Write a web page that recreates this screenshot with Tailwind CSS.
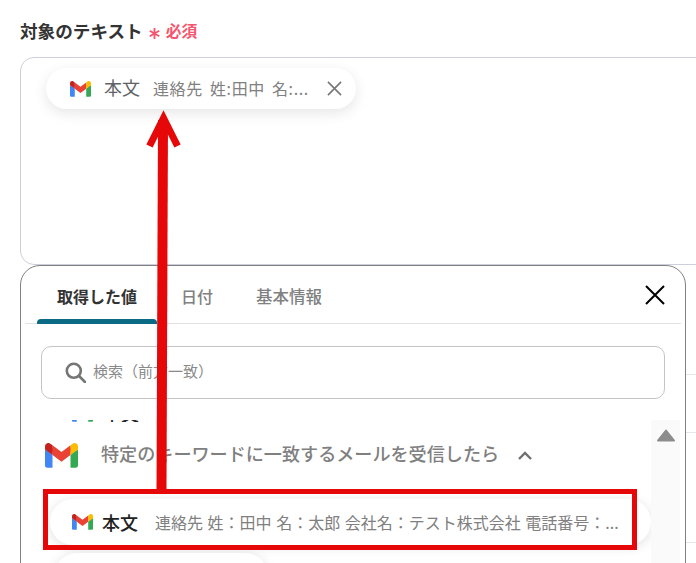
<!DOCTYPE html>
<html lang="ja">
<head>
    <meta charset="UTF-8">
    <title>対象のテキスト</title>
    <script src="https://cdn.jsdelivr.net/npm/@tailwindcss/browser@4"></script>
</head>
<body class="bg-white overflow-hidden font-['Noto_Sans_CJK_JP','Noto_Sans',sans-serif]">
    <svg class="hidden">
        <symbol id="gmail" viewBox="0 0 256 193">
            <path fill="#4285F4" d="M58.182 192.05V93.14L27.507 65.077 0 49.504v125.091c0 9.658 7.825 17.455 17.455 17.455h40.727Z"/>
            <path fill="#34A853" d="M197.818 192.05h40.727c9.659 0 17.455-7.826 17.455-17.455V49.505l-31.156 17.837-27.026 25.798v98.91Z"/>
            <path fill="#EA4335" d="m58.182 93.14-4.174-38.647 4.174-36.989L128 69.868l69.818-52.364 4.669 34.992-4.669 40.644L128 145.504z"/>
            <path fill="#FBBC04" d="M197.818 17.504V93.14L256 49.504V26.231c0-21.585-24.64-33.89-41.89-20.945l-16.292 12.218Z"/>
            <path fill="#C5221F" d="m0 49.504 26.759 20.07L58.182 93.14V17.504L41.89 5.286C24.61-7.66 0 4.646 0 26.23v23.273Z"/>
        </symbol>
    </svg>

    <div class="relative w-[696px] h-[563px] overflow-hidden pl-5">
        <!-- 右端にのぞく背面の罫線 -->
        <div class="absolute left-[686px] top-[374px] w-[10px] h-px bg-gray-200"></div>
        <div class="absolute left-[686px] top-[432px] w-[10px] h-px bg-gray-200"></div>
        <div class="absolute left-[686px] top-[542px] w-[10px] h-px bg-gray-200"></div>

        <div class="flex items-center h-[57px] pt-[5px]">
            <span class="text-[17.6px] font-bold text-[#333] leading-none">対象のテキスト</span>
            <svg class="ml-[6px] mt-[5px] w-[11px] h-[11px]" viewBox="0 0 12 12" fill="none" stroke="#f4566f" stroke-width="2"><path d="M6 0v12M.8 3l10.400 6M.8 9l10.400-6"/></svg>
            <span class="ml-[6px] text-[15.8px] font-bold text-[#f4566f] leading-none">必須</span>
        </div>

        <div class="w-[700px] h-[208px] border border-[#cdd0dc] rounded-l-[14px] pl-[25px] pt-[10px]">
            <div class="flex items-center w-[310px] h-[41px] rounded-full bg-white shadow-[0_4px_14px_rgba(0,0,0,0.1)] pl-[24px]">
                <svg class="w-[21px] h-[16px] shrink-0"><use href="#gmail"/></svg>
                <span class="ml-[13px] mb-[3px] text-[18px] text-[#5f6368] leading-none">本文</span>
                <span class="ml-[13px] mb-[2px] w-[156px] text-[16px] tracking-[0.6px] [word-spacing:3px] text-[#808080] leading-none whitespace-nowrap">連絡先 姓:田中 名:...</span>
                <svg class="ml-[18px] w-[15px] h-[15px] shrink-0" viewBox="0 0 16 16" fill="none" stroke="#777" stroke-width="1.7"><path d="M1 1l14 14M15 1L1 15"/></svg>
            </div>
        </div>

        <div class="relative w-[666px] h-[320px] bg-white border border-[#808080] rounded-t-[20px] overflow-hidden">
            <!-- タブ -->
            <div class="flex items-stretch h-[58px] mx-[4px] border-b border-[#e2e2e2]">
                <div class="relative w-[120px] ml-[12px] pt-[3px] flex items-center justify-center text-[16px] font-bold text-[#333]">
                    取得した値
                    <div class="absolute left-0 right-0 bottom-[-1px] h-[5px] bg-[#0b6b85] rounded-t-[4px]"></div>
                </div>
                <div class="ml-[24px] pt-[3px] flex items-center text-[16px] text-[#808080] font-medium">日付</div>
                <div class="ml-[43px] pt-[3px] flex items-center text-[16.500px] text-[#808080] font-medium">基本情報</div>
                <svg class="ml-auto mr-[16px] self-center w-[20px] h-[20px]" viewBox="0 0 20 20" fill="none" stroke="#000" stroke-width="2"><path d="M1 1l18 18M19 1L1 19"/></svg>
            </div>

            <!-- 検索 -->
            <div class="flex items-center ml-[20px] mt-[22px] w-[624px] h-[53px] border border-[#c4c4c4] rounded-[10px] pl-[23px]">
                <svg class="w-[21px] h-[21px] shrink-0" viewBox="0 0 21 21" fill="none" stroke="#757575" stroke-width="2.6"><circle cx="8.8" cy="8.8" r="7"/><path d="M14 14l6 6" stroke-linecap="round"/></svg>
                <span class="ml-[7px] mb-[3px] text-[15px] text-[#8a8a8a]">検索（前方一致）</span>
            </div>

            <!-- 一覧 -->
            <div class="flex mt-[21px] h-[160px]">
                <div class="relative w-[630px] overflow-hidden">
                    <div class="flex items-end h-[2px] pl-[51px] overflow-hidden">
                        <svg class="w-[21px] h-[16px] shrink-0"><use href="#gmail"/></svg>
                        <span class="ml-[10px] text-[18px] leading-none font-medium text-[#222]">本文</span>
                    </div>
                    <div class="flex items-center h-[66px] pl-[24px]">
                        <svg class="w-[33px] h-[25px] shrink-0"><use href="#gmail"/></svg>
                        <span class="ml-[23px] mb-[2px] text-[18.100px] font-medium text-[#808080] whitespace-nowrap">特定のキーワードに一致するメールを受信したら</span>
                        <svg class="ml-[19px] w-[14px] h-[9px]" viewBox="0 0 14 9" fill="none" stroke="#6f6f6f" stroke-width="2.4"><path d="M1 8l6-6 6 6"/></svg>
                    </div>
                    <div class="flex items-center ml-[29px] mt-[11px] h-[46px] rounded-full bg-white shadow-[0_2px_12px_rgba(0,0,0,0.12)] pl-[22px]">
                        <svg class="w-[21px] h-[16px] shrink-0"><use href="#gmail"/></svg>
                        <span class="ml-[9px] text-[18px] font-medium text-[#222]">本文</span>
                        <span class="ml-[17px] text-[16px] [word-spacing:1px] text-[#808080] whitespace-nowrap">連絡先 姓：田中 名：太郎 会社名：テスト株式会社 電話番号：...</span>
                    </div>
                    <div class="ml-[33px] mt-[8px] w-[214px] h-[46px] rounded-full bg-white shadow-[0_2px_12px_rgba(0,0,0,0.12)]"></div>
                </div>
                <div class="w-[29px] bg-[#fafafa] flex justify-center pt-[9px]">
                    <svg class="w-[18px] h-[13px]" viewBox="0 0 18 13"><path d="M9 1.500L17 11.500H1Z" fill="#8c8c8c" stroke="#8c8c8c" stroke-width="2" stroke-linejoin="round"/></svg>
                </div>
            </div>
        </div>

        <!-- 赤い注釈 -->
        <svg class="absolute left-0 top-0 pointer-events-none" width="696" height="563" viewBox="0 0 696 563" fill="none" stroke="#e60808">
            <path d="M161.500 490L163 120" stroke-width="10"/>
            <path d="M149.500 146L163.500 118L177.500 146" stroke-width="7"/>
        </svg>
        <div class="absolute left-[43px] top-[489px] w-[594px] h-[61px] border-[5px] border-[#e60808]"></div>
    </div>
</body>
</html>
